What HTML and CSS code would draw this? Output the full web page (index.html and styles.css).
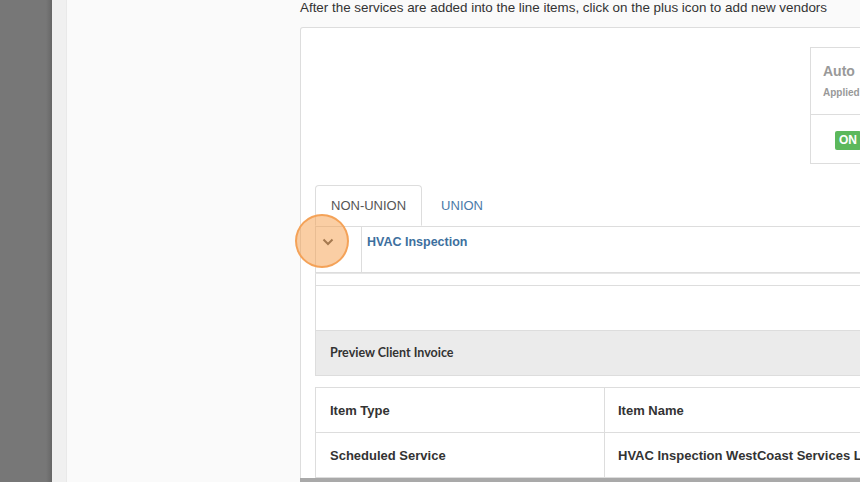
FILE: index.html
```html
<!DOCTYPE html>
<html>
<head>
<meta charset="utf-8">
<link rel="stylesheet" href="styles.css">
</head>
<body>
<div class="page">
  <aside class="dark-side"></aside>
  <div class="strip"></div>
  <main class="main">
    <p class="intro">After the services are added into the line items, click on the plus icon to add new vendors</p>
    <section class="card">
      <div class="card-top">
        <div class="auto-panel">
          <div class="auto-head">
            <div class="auto-title">Auto</div>
            <div class="auto-sub">Applied</div>
          </div>
          <div class="auto-body"><span class="badge-on">ON</span></div>
        </div>
      </div>
      <ul class="tabs">
        <li class="tab active">NON-UNION</li>
        <li class="tab">UNION</li>
      </ul>
      <div class="vendor-row">
        <div class="toggle-cell">
          <svg class="chev" width="12" height="8" viewBox="0 0 12 8"><path d="M1.5 1.5 L6 6 L10.5 1.5" fill="none" stroke="#555" stroke-width="2"/></svg>
          <span class="highlight"></span>
        </div>
        <div class="vendor-name">HVAC Inspection</div>
      </div>
      <div class="gap-line"></div>
      <div class="blank-box"></div>
      <div class="preview-head">Preview Client Invoice</div>
      <table class="invoice">
        <tr><td class="c1">Item Type</td><td>Item Name</td></tr>
        <tr><td class="c1">Scheduled Service</td><td>HVAC Inspection WestCoast Services LLC</td></tr>
      </table>
      <div class="hbar"></div>
    </section>
  </main>
</div>
</body>
</html>
```
FILE: styles.css
```css
html, body { margin: 0; padding: 0; }
body {
  width: 860px; height: 482px; overflow: hidden;
  font-family: "Liberation Sans", Arial, sans-serif;
  background: #fafafa;
}
.page { display: flex; height: 482px; }
.dark-side {
  width: 52px; flex: none;
  background: linear-gradient(to right, #777 0, #777 46px, #6c6c6c 50px, #666 52px);
}
.strip { width: 14px; flex: none; background: #f0f0f0; border-right: 1px solid #e9e9e9; }
.main { flex: none; width: 1000px; padding-left: 233px; background: #fafafa; }
.intro {
  margin: 0; font-size: 13.4px; line-height: 15px; color: #333; height: 27px;
}
.card {
  width: 608px; background: #fff; border: 1px solid #ddd; border-bottom: none;
  border-radius: 3px 3px 0 0; padding: 19px 15px 0 14px;
}
.card-top { display: flex; justify-content: flex-end; }
.auto-panel { width: 112px; border: 1px solid #ddd; margin-right: -1px; }
.auto-head { height: 67px; border-bottom: 1px solid #ddd; padding: 15px 0 0 12px; box-sizing: border-box; }
.auto-title { font-weight: bold; font-size: 14px; color: #999; line-height: 17px; }
.auto-sub { font-weight: bold; font-size: 10px; color: #999; margin-top: 7px; line-height: 12px; }
.auto-body { height: 48px; padding: 15px 0 0 24px; box-sizing: border-box; }
.badge-on {
  display: inline-block; background: #5cb85c; color: #fff; font-weight: bold;
  font-size: 12px; line-height: 19px; padding: 0 4px; border-radius: 2px;
}
.tabs {
  list-style: none; margin: 21px 0 0; padding: 0; display: flex;
  border-bottom: 1px solid #ddd; height: 41px;
}
.tab {
  font-size: 13px; line-height: 17px; padding: 11px 15px 12px; color: #4a7aa8;
  margin-right: 3px; border: 1px solid transparent; border-radius: 4px 4px 0 0;
}
.tab.active { color: #555; border-color: #ddd; border-bottom-color: #fff; background: #fff; margin-bottom: -1px; height: 41px; box-sizing: border-box; }
.vendor-row { display: flex; height: 45px; border: 1px solid #ddd; border-top: none; }
.toggle-cell { width: 46px; border-right: 1px solid #ddd; position: relative; padding: 11px 0 0 6px; box-sizing: border-box; }
.chev { display: block; }
.highlight {
  position: absolute; left: -21px; top: -13px; width: 50px; height: 50px;
  border-radius: 50%; background: rgba(246, 158, 74, 0.5); border: 2px solid rgba(244, 160, 84, 0.95);
}
.vendor-name { color: #3d6f9e; font-weight: bold; font-size: 12.5px; padding: 8px 0 0 5px; }
.gap-line { height: 11px; border-left: 1px solid #ddd; border-top: 1px solid #e6e6e6; }
.blank-box { height: 44px; border: 1px solid #ddd; border-bottom: none; }
.preview-head {
  background: #ebebeb; border: 1px solid #ddd; box-sizing: border-box; height: 46px;
  font-family: Lato, "Liberation Sans", sans-serif; font-weight: bold; font-size: 12.5px; color: #333;
  padding-left: 14px; line-height: 44px;
}
.invoice { margin-top: 11px; border-collapse: collapse; width: 100%; }
.invoice td {
  border: 1px solid #ddd; height: 44px; padding: 0 0 0 13px; font-size: 13px; font-weight: bold; color: #333;
  white-space: nowrap;
}
.invoice td.c1 { width: 274px; padding-left: 14px; }
.hbar { height: 10px; background: #a9a9a9; margin: 0 -15px 0 -15px; }
```
